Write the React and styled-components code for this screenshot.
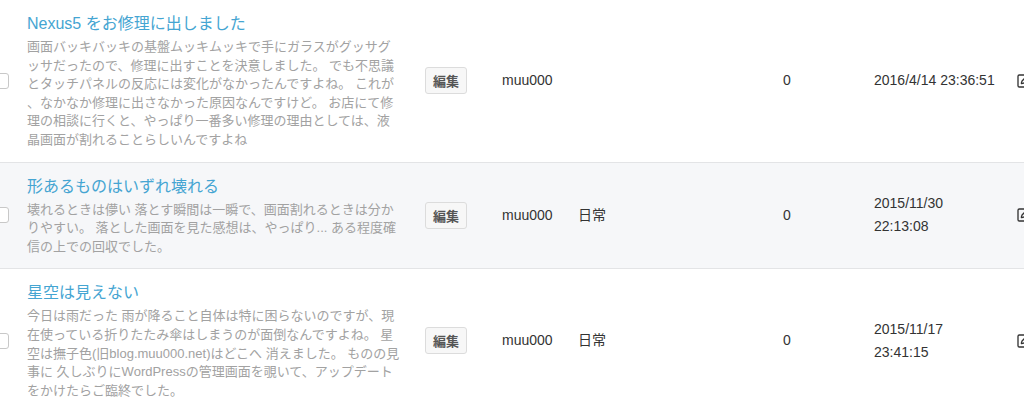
import React from 'react'
import styled, { createGlobalStyle } from 'styled-components'
import { SquarePen } from 'lucide-react'

const GlobalStyle = createGlobalStyle`
  html, body {
    margin: 0;
    padding: 0;
    background: #fff;
    overflow: hidden;
  }
  body {
    font-family: "Liberation Sans", "Noto Sans CJK JP", sans-serif;
    color: #333;
  }
`

const List = styled.div`
  margin-left: -15px;
  margin-top: -1px;
  width: 1080px;
`

const Row = styled.div`
  display: grid;
  grid-template-columns: 32px 392px 81px 76px 205px 91px 142px 56px;
  align-items: center;
  background: ${({ $alt }) => ($alt ? '#f6f7f9' : '#fff')};
  border-top: 1px solid #e3e4e6;
`

const CheckCell = styled.div`
  display: flex;
  justify-content: center;
`

const Check = styled.span`
  display: block;
  width: 14px;
  height: 14px;
  border: 1px solid #c8c8c8;
  border-radius: 3px;
  background: #fff;
`

const TitleCell = styled.div`
  padding: 12px 10px 12px 10px;
`

const Title = styled.a`
  display: block;
  font-size: 16px;
  line-height: 24px;
  color: #45a5d2;
  text-decoration: none;
  white-space: nowrap;
`

const Excerpt = styled.div`
  margin-top: 2px;
  font-size: 13px;
  line-height: 18.6px;
  color: #a2a2a2;
`

const Line = styled.span`
  display: block;
  white-space: nowrap;
`

const Cell = styled.div`
  padding-left: ${({ $pad }) => $pad || 12}px;
  font-size: 14px;
  line-height: 23px;
  color: #333;
`

const EditButton = styled.button`
  display: block;
  width: 42px;
  height: 27px;
  padding: 0;
  border: 1px solid #dcdcdc;
  border-radius: 3px;
  background: #f7f7f7;
  font-family: "Liberation Sans", "Noto Sans CJK JP", sans-serif;
  font-size: 13px;
  font-weight: bold;
  color: #555;
`

const DateText = styled.div`
  width: 124px;
`

const posts = [
  {
    title: 'Nexus5 をお修理に出しました',
    lines: [
      '画面バッキバッキの基盤ムッキムッキで手にガラスがグッサグ',
      'ッサだったので、修理に出すことを決意しました。 でも不思議',
      'とタッチパネルの反応には変化がなかったんですよね。 これが',
      '、なかなか修理に出さなかった原因なんですけど。 お店にて修',
      '理の相談に行くと、やっぱり一番多い修理の理由としては、液',
      '晶画面が割れることらしいんですよね',
    ],
    category: '',
    date: '2016/4/14 23:36:51',
  },
  {
    title: '形あるものはいずれ壊れる',
    lines: [
      '壊れるときは儚い 落とす瞬間は一瞬で、画面割れるときは分か',
      'りやすい。 落とした画面を見た感想は、やっぱり... ある程度確',
      '信の上での回収でした。',
    ],
    category: '日常',
    date: '2015/11/30 22:13:08',
    alt: true,
  },
  {
    title: '星空は見えない',
    lines: [
      '今日は雨だった 雨が降ること自体は特に困らないのですが、現',
      '在使っている折りたたみ傘はしまうのが面倒なんですよね。 星',
      '空は撫子色(旧blog.muu000.net)はどこへ 消えました。 ものの見',
      '事に 久しぶりにWordPressの管理画面を覗いて、アップデート',
      'をかけたらご臨終でした。',
    ],
    category: '日常',
    date: '2015/11/17 23:41:15',
  },
]

const App = () => {
  return (
    <>
      <GlobalStyle />
      <List>
        {posts.map((post) => (
          <Row key={post.title} $alt={post.alt}>
            <CheckCell>
              <Check />
            </CheckCell>
            <TitleCell>
              <Title href="#">{post.title}</Title>
              <Excerpt>
                {post.lines.map((line) => (
                  <Line key={line}>{line}</Line>
                ))}
              </Excerpt>
            </TitleCell>
            <Cell $pad={16}>
              <EditButton>編集</EditButton>
            </Cell>
            <Cell>muu000</Cell>
            <Cell>{post.category}</Cell>
            <Cell>0</Cell>
            <Cell>
              <DateText>{post.date}</DateText>
            </Cell>
            <Cell>
              <SquarePen size={16} strokeWidth={2} color="#333" style={{ display: 'block' }} />
            </Cell>
          </Row>
        ))}
      </List>
    </>
  )
}

export default App
